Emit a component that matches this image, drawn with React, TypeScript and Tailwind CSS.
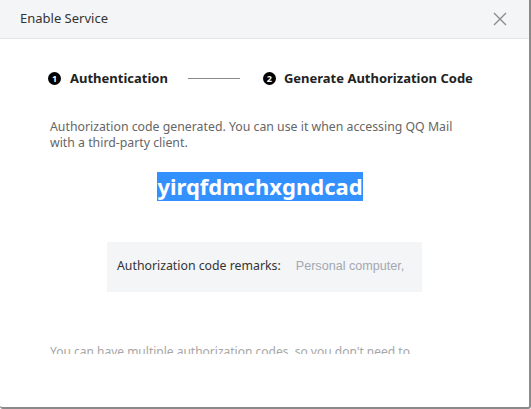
export default function App() {
  return (
    <div
      className="w-[531px] h-[409px] bg-white overflow-hidden flex flex-col border-r-2 border-b-2 border-[#8a8a8a] rounded-b-[3px] text-[#333]"
      style={{ fontFamily: '"Noto Sans", "Open Sans", Arial, sans-serif' }}
    >
      {/* Header */}
      <div className="h-[39px] shrink-0 flex items-center justify-between pl-5 pr-[22px] bg-[#f4f5f7] border-b border-[#e4e6ea]">
        <span className="text-[13px] text-[#333]">Enable Service</span>
        <svg width="14" height="14" viewBox="0 0 14 14" className="text-[#8c8c8c]">
          <path d="M1 1L13 13M13 1L1 13" stroke="currentColor" strokeWidth="1.4" />
        </svg>
      </div>

      {/* Body */}
      <div className="h-[315px] shrink-0 overflow-hidden">
        {/* Steps */}
        <div className="flex items-center pl-[48px] pt-[30px]">
          <span className="w-[13px] h-[13px] rounded-full bg-black text-white text-[9px] font-bold flex items-center justify-center leading-none">1</span>
          <span className="ml-[9px] text-[13px] font-bold text-[#222]">Authentication</span>
          <span className="ml-[20px] w-[52px] h-px bg-[#888]" />
          <span className="ml-[23px] w-[13px] h-[13px] rounded-full bg-black text-white text-[9px] font-bold flex items-center justify-center leading-none">2</span>
          <span className="ml-[8px] text-[13px] font-bold text-[#222]">Generate Authorization Code</span>
        </div>

        <p className="mt-[30px] ml-[50px] w-[405px] text-[12.3px] leading-[16px] text-[#666]">
          Authorization code generated. You can use it when accessing QQ Mail with a third-party client.
        </p>

        <div className="mt-[21px] flex justify-center pr-[9px]">
          <span className="bg-[#3390ff] text-white text-[22px] font-bold leading-[29px] px-0">yirqfdmchxgndcad</span>
        </div>

        <div className="mt-[41px] mx-auto w-[315px] h-[50px] bg-[#f4f5f7] flex items-center pl-[10px] text-[12.3px]">
          <span className="text-[#333]">Authorization code remarks:</span>
          <span className="ml-[15px] text-[#a3a8b0] text-[12.6px]" style={{ fontFamily: '"Liberation Sans", Arial, sans-serif' }}>
            Personal computer,
          </span>
        </div>

        <p className="mt-[52px] ml-[50px] text-[12px] leading-[16px] text-[#a6a6a6]">
          You can have multiple authorization codes, so you don't need to
        </p>
      </div>
    </div>
  );
}
